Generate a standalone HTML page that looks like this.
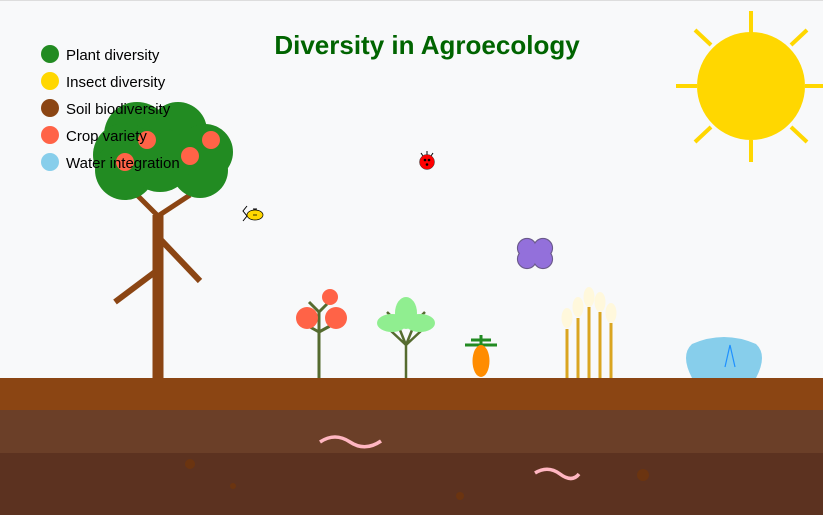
<!DOCTYPE html>
<html><head><meta charset="utf-8"><style>
html,body{margin:0;padding:0;background:#f8f9fa;}
svg{display:block;}
text{font-family:"Liberation Sans",Arial,sans-serif;}
</style></head><body>
<svg width="823" height="515" viewBox="0 0 823 515" xmlns="http://www.w3.org/2000/svg">
<rect x="0" y="0" width="823" height="515" fill="#f8f9fa"/>
<line x1="0" y1="0.5" x2="823" y2="0.5" stroke="#ddd" stroke-width="1"/>
<rect x="0" y="378" width="823" height="32" fill="#8B4513"/>
<rect x="0" y="410" width="823" height="43" fill="#6B3F28"/>
<rect x="0" y="453" width="823" height="62" fill="#5C3220"/>
<path d="M320,442 Q335,432 350,442 T381,441" fill="none" stroke="#FFB6C1" stroke-width="3.5"/>
<path d="M535,473 Q548,465 560,474 T579,474" fill="none" stroke="#FFB6C1" stroke-width="3.5"/>
<g fill="#6B3410">
<circle cx="190" cy="464" r="5"/><circle cx="233" cy="486" r="3"/><circle cx="460" cy="496" r="4"/><circle cx="643" cy="475" r="6"/>
</g>
<g stroke="#FFD700" stroke-width="4">
<line x1="751" y1="11" x2="751" y2="33"/><line x1="751" y1="140" x2="751" y2="162"/>
<line x1="676" y1="86" x2="697" y2="86"/><line x1="805" y1="86" x2="826" y2="86"/>
<line x1="695" y1="30" x2="711" y2="45"/><line x1="807" y1="30" x2="791" y2="45"/>
<line x1="695" y1="142" x2="711" y2="127"/><line x1="807" y1="142" x2="791" y2="127"/>
</g>
<circle cx="751" cy="86" r="54" fill="#FFD700"/>
<g stroke="#8B4513" stroke-linecap="butt">
<line x1="158" y1="215" x2="158" y2="378" stroke-width="11"/>
<line x1="161" y1="240" x2="200" y2="281" stroke-width="6"/>
<line x1="155" y1="272" x2="115" y2="302" stroke-width="6"/>
<line x1="158" y1="216" x2="137" y2="195" stroke-width="5"/>
<line x1="158" y1="216" x2="190" y2="195" stroke-width="5"/>
</g>
<g fill="#228B22">
<circle cx="137" cy="135" r="33"/><circle cx="178" cy="131" r="29"/><circle cx="205" cy="152" r="28"/>
<circle cx="125" cy="155" r="32"/><circle cx="125" cy="170" r="30"/><circle cx="200" cy="170" r="28"/><circle cx="160" cy="160" r="32"/>
</g>
<g fill="#FF6347">
<circle cx="147" cy="140" r="9"/><circle cx="190" cy="156" r="9"/><circle cx="211" cy="140" r="9"/><circle cx="125" cy="162" r="9"/>
</g>
<circle cx="50" cy="54" r="9" fill="#228B22"/><text x="66" y="60" font-size="15" fill="#000">Plant diversity</text>
<circle cx="50" cy="81" r="9" fill="#FFD700"/><text x="66" y="87" font-size="15" fill="#000">Insect diversity</text>
<circle cx="50" cy="108" r="9" fill="#8B4513"/><text x="66" y="114" font-size="15" fill="#000">Soil biodiversity</text>
<circle cx="50" cy="135" r="9" fill="#FF6347"/><text x="66" y="141" font-size="15" fill="#000">Crop variety</text>
<circle cx="50" cy="162" r="9" fill="#87CEEB"/><text x="66" y="168" font-size="15" fill="#000">Water integration</text>
<text x="427" y="54" font-size="26" font-weight="bold" fill="#006400" text-anchor="middle">Diversity in Agroecology</text>
<g stroke="#000" stroke-width="1">
<line x1="427" y1="155" x2="427" y2="151"/><line x1="423" y1="156" x2="421" y2="153"/><line x1="431" y1="156" x2="433" y2="153"/>
</g>
<circle cx="427" cy="162" r="7.5" fill="#FF0000" stroke="#333" stroke-width="0.5"/>
<g fill="#000"><circle cx="425" cy="160" r="1.3"/><circle cx="429" cy="160" r="1.3"/><circle cx="427" cy="164.5" r="1.3"/></g>
<path d="M247,206 L243,211 L247,216 L243,221 M253,209 L257,209 M255,209 L255,211" fill="none" stroke="#000" stroke-width="1"/>
<ellipse cx="255" cy="215" rx="8" ry="5" fill="#FFD700" stroke="#000" stroke-width="0.7"/>
<line x1="253" y1="215" x2="257" y2="215" stroke="#000" stroke-width="0.8"/>
<g stroke="#6a5a8a" stroke-width="1.2" fill="#9370DB">
<circle cx="527" cy="248" r="9.5"/><circle cx="543" cy="248" r="9.5"/><circle cx="527" cy="259" r="9.5"/><circle cx="543" cy="259" r="9.5"/>
</g>
<g fill="#9370DB">
<circle cx="527" cy="248" r="8.9"/><circle cx="543" cy="248" r="8.9"/><circle cx="527" cy="259" r="8.9"/><circle cx="543" cy="259" r="8.9"/>
<rect x="524" y="245" width="22" height="17"/>
</g>
<g stroke="#556B2F" stroke-width="3">
<line x1="319" y1="312" x2="319" y2="378"/>
<line x1="319" y1="312" x2="309" y2="302"/><line x1="319" y1="312" x2="327" y2="304"/>
<line x1="319" y1="332" x2="310" y2="327"/><line x1="319" y1="332" x2="330" y2="326"/>
</g>
<g fill="#FF6347"><circle cx="307" cy="318" r="11"/><circle cx="336" cy="318" r="11"/><circle cx="330" cy="297" r="8"/></g>
<g stroke="#556B2F" stroke-width="2.5" fill="none">
<line x1="406" y1="345" x2="406" y2="378"/>
<path d="M406,345 L390,330 M406,345 L422,330 M406,345 L398,325 M406,345 L414,325 M390,315 L387,312 M422,315 L425,312"/>
</g>
<g fill="#90EE90"><ellipse cx="392" cy="323" rx="15" ry="9"/><ellipse cx="420" cy="323" rx="15" ry="9"/><ellipse cx="406" cy="313" rx="11" ry="16"/></g>
<g stroke="#228B22" stroke-width="3"><line x1="465" y1="345" x2="497" y2="345"/><line x1="481" y1="335" x2="481" y2="345"/><line x1="471" y1="340" x2="491" y2="340"/></g>
<ellipse cx="481" cy="361" rx="8.5" ry="16" fill="#FF8C00"/>
<g stroke="#DAA520" stroke-width="3">
<line x1="567" y1="329" x2="567" y2="378"/><line x1="578" y1="318" x2="578" y2="378"/><line x1="589" y1="307" x2="589" y2="378"/><line x1="600" y1="312" x2="600" y2="378"/><line x1="611" y1="323" x2="611" y2="378"/>
</g>
<g fill="#FFF8DC">
<ellipse cx="567" cy="318" rx="5.5" ry="10"/><ellipse cx="578" cy="307" rx="5.5" ry="10"/><ellipse cx="589" cy="297" rx="5.5" ry="10"/><ellipse cx="600" cy="302" rx="5.5" ry="10"/><ellipse cx="611" cy="313" rx="5.5" ry="10"/>
</g>
<path d="M692,378 Q680,355 692,344 Q724,330 756,344 Q768,355 756,378 Z" fill="#87CEEB"/>
<path d="M725,367 L730,345 L735,367" fill="none" stroke="#1E90FF" stroke-width="1.2"/>
</svg>
</body></html>
